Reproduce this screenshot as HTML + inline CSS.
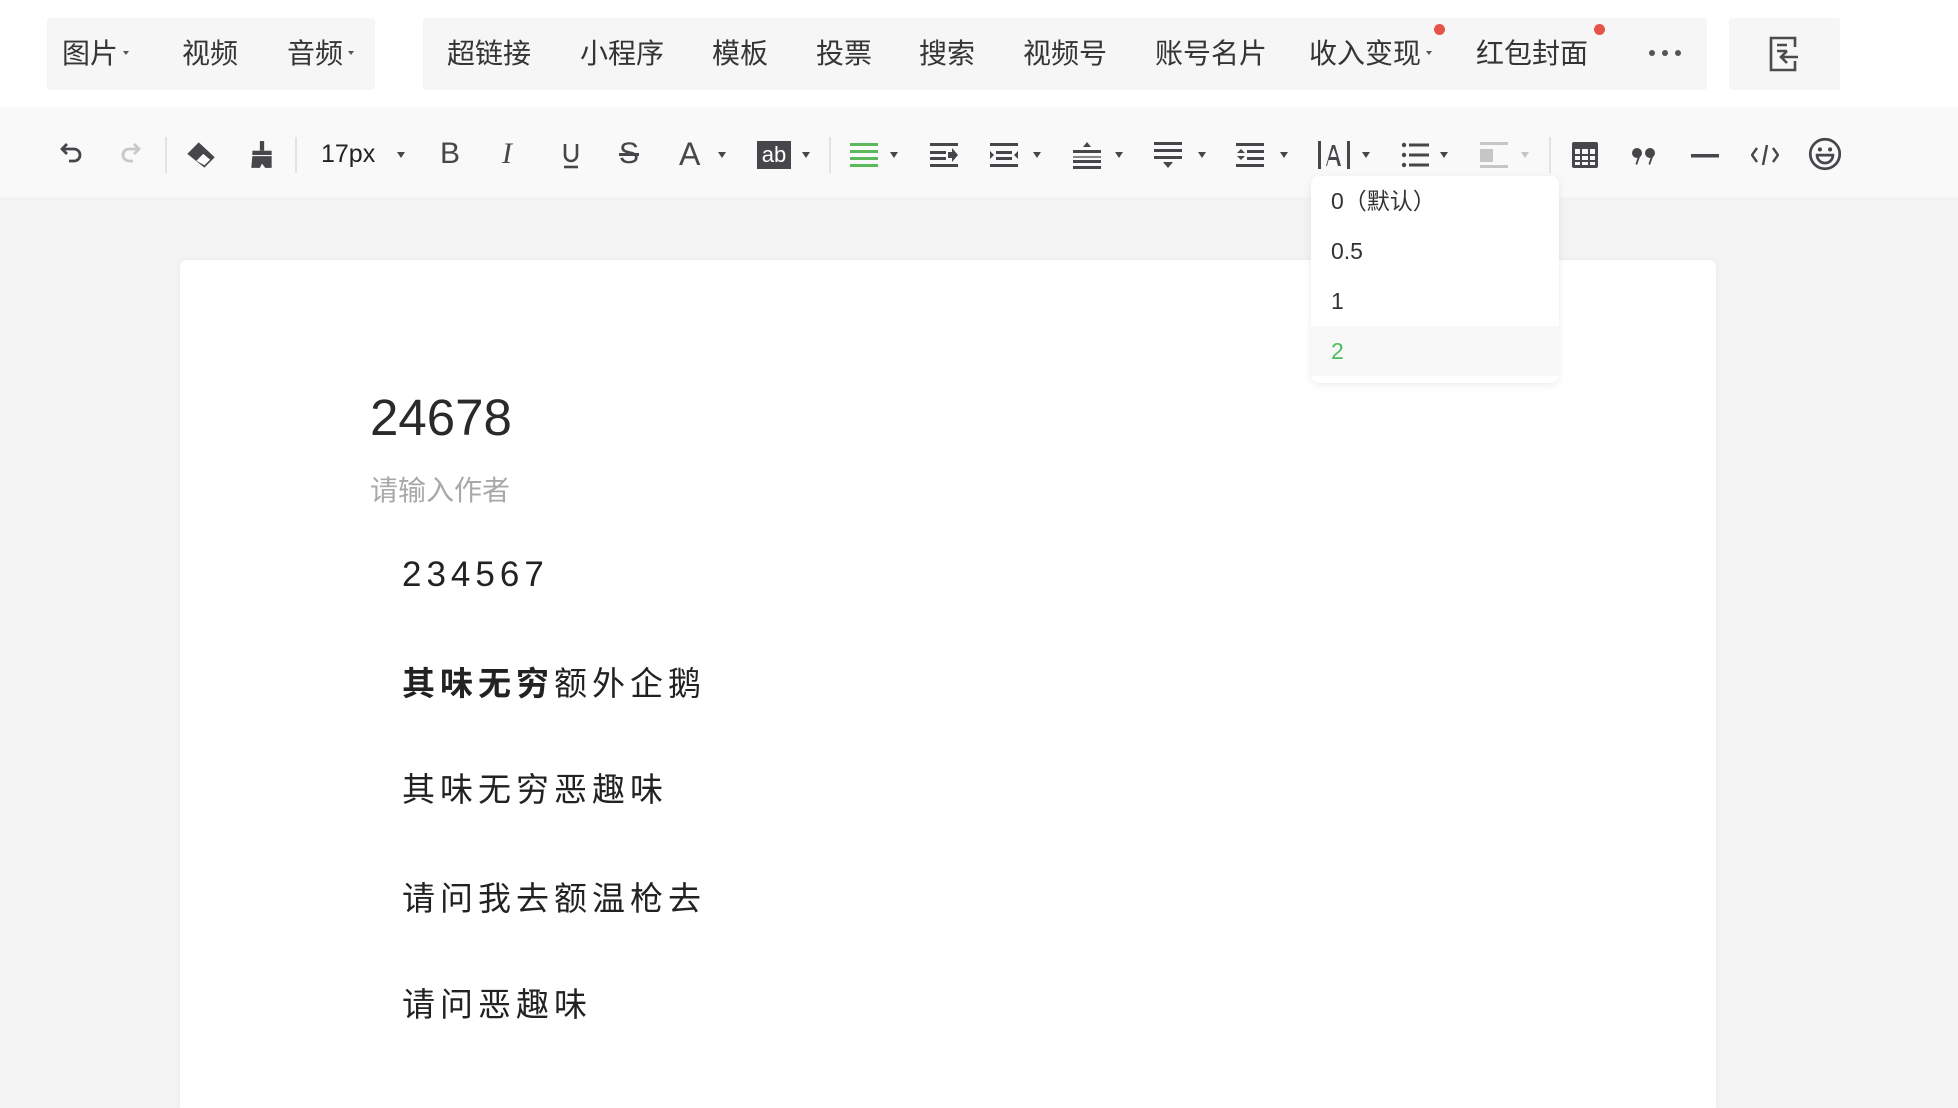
<!DOCTYPE html>
<html><head><meta charset="utf-8"><style>
*{margin:0;padding:0;box-sizing:border-box}
html,body{width:1958px;height:1108px;overflow:hidden}
body{background:#f3f3f3;position:relative;font-family:"Liberation Sans","Noto Sans CJK SC",sans-serif;color:#333}
.top{position:absolute;left:0;top:0;width:1958px;height:107px;background:#fff}
.grp{position:absolute;top:18px;height:72px;background:#f6f6f6;border-radius:3px}
.ti{position:absolute;top:36px;font-size:28px;line-height:36px;color:#353535;white-space:nowrap}
.tri{display:inline-block;width:0;height:0;border-left:3px solid transparent;border-right:3px solid transparent;border-top:4px solid #555;vertical-align:middle;margin-left:5px;position:relative;top:-3px}
.dot{position:absolute;width:11px;height:11px;border-radius:50%;background:#e5534b}
.tb{position:absolute;left:0;top:107px;width:1958px;height:90px;background:#f9f9f9}
.ic{position:absolute;top:141px;width:28px;height:28px}
.ar{position:absolute;top:152px;width:0;height:0;border-left:4px solid transparent;border-right:4px solid transparent;border-top:6px solid #46464b}
.sep{position:absolute;top:137px;width:2px;height:36px;background:#e3e3e3}
.card{position:absolute;left:180px;top:260px;width:1536px;height:848px;background:#fff;border-radius:7px 7px 0 0;box-shadow:0 0 6px rgba(0,0,0,.04)}
.p{position:absolute;left:402px;font-size:33px;letter-spacing:5px;color:#222;white-space:nowrap;line-height:40px}
.dd{position:absolute;left:1311px;top:176px;width:248px;height:207px;background:#fff;border-radius:8px;box-shadow:0 2px 8px rgba(0,0,0,.08)}
.di{position:absolute;left:20px;font-size:23px;line-height:30px;color:#333}
</style></head><body>
<div class="top"></div>
<div class="grp" style="left:47px;width:328px"></div>
<div class="grp" style="left:423px;width:1284px"></div>
<div class="grp" style="left:1729px;width:111px"></div>
<div class="ti" style="left:62px">图片<span class="tri"></span></div>
<div class="ti" style="left:182px">视频</div>
<div class="ti" style="left:287px">音频<span class="tri"></span></div>
<div class="ti" style="left:447px">超链接</div>
<div class="ti" style="left:580px">小程序</div>
<div class="ti" style="left:712px">模板</div>
<div class="ti" style="left:816px">投票</div>
<div class="ti" style="left:919px">搜索</div>
<div class="ti" style="left:1023px">视频号</div>
<div class="ti" style="left:1155px">账号名片</div>
<div class="ti" style="left:1309px">收入变现<span class="tri"></span></div>
<div class="ti" style="left:1476px">红包封面</div>
<div class="dot" style="left:1434px;top:24px"></div>
<div class="dot" style="left:1594px;top:24px"></div>
<svg style="position:absolute;left:1648px;top:48px" width="34" height="10"><circle cx="4" cy="5" r="3" fill="#555"/><circle cx="17" cy="5" r="3" fill="#555"/><circle cx="30" cy="5" r="3" fill="#555"/></svg>
<svg style="position:absolute;left:1768px;top:35px" width="32" height="38" viewBox="0 0 32 38" fill="none" stroke="#4a4a4f" stroke-width="2.6"><path d="M27 12V3H3v32h24v-9"/><path d="M9 10h10M9 16h10"/><path d="M30 22H14M19 16l-6 6 6 6"/></svg>

<div class="tb"></div>
<svg class="ic" style="left:57px" viewBox="0 0 28 28" fill="none" stroke="#46464b" stroke-width="2.8"><path d="M6 8h11a6 6 0 0 1 0 12h-5"/><path d="M10 3L5 8l5 5"/></svg>
<svg class="ic" style="left:116px" viewBox="0 0 28 28" fill="none" stroke="#c8c8c8" stroke-width="2.8"><path d="M22 8h-9a6 6 0 0 0 0 12h4"/><path d="M18 3l5 5-5 5"/></svg>
<div class="sep" style="left:165px"></div>
<svg class="ic" style="left:185px;width:32px;height:32px;top:139px" viewBox="0 0 28 28"><path d="M2 13L12 3l14 13-9 9z" fill="#46464b"/><path d="M10 19l6-6 6 5-5 5z" fill="#fff"/></svg>
<svg class="ic" style="left:247px;width:30px;height:30px;top:140px" viewBox="0 0 28 28" fill="#46464b"><rect x="12" y="1" width="4" height="9"/><rect x="5" y="10" width="18" height="4"/><path d="M5 15h18v11h-6l-3-4-2 4H4z"/></svg>
<div class="sep" style="left:295px"></div>
<div style="position:absolute;left:321px;top:138px;font-size:25px;line-height:32px;color:#222">17px</div>
<div class="ar" style="left:397px"></div>
<div style="position:absolute;left:440px;top:136px;font-size:30px;line-height:36px;color:#46464b">B</div>
<div style="position:absolute;left:502px;top:136px;font-size:30px;line-height:36px;color:#46464b;font-family:'Liberation Serif',serif;font-style:italic">I</div>
<svg class="ic" style="left:557px" viewBox="0 0 28 28" fill="none" stroke="#46464b" stroke-width="2.6"><path d="M8 3v11a6 6 0 0 0 12 0V3"/><path d="M7 26h14"/></svg>
<div style="position:absolute;left:619px;top:136px;font-size:30px;line-height:36px;color:#46464b;text-decoration:line-through">S</div>
<div style="position:absolute;left:679px;top:136px;font-size:32px;line-height:36px;color:#46464b">A</div>
<div class="ar" style="left:718px"></div>
<div style="position:absolute;left:757px;top:141px;width:34px;height:28px;background:#46464b;color:#fff;font-size:22px;line-height:27px;text-align:center">ab</div>
<div class="ar" style="left:802px"></div>
<div class="sep" style="left:829px"></div>
<svg class="ic" style="left:850px" viewBox="0 0 28 28" fill="#5cb85c"><rect x="0" y="2" width="28" height="3"/><rect x="0" y="9" width="28" height="3"/><rect x="0" y="16" width="28" height="3"/><rect x="0" y="23" width="28" height="3"/></svg>
<div class="ar" style="left:890px"></div>
<svg class="ic" style="left:930px" viewBox="0 0 28 28" fill="#46464b"><rect x="0" y="2" width="28" height="3"/><rect x="0" y="10" width="16" height="3"/><rect x="0" y="16" width="16" height="3"/><path d="M18 11h4V7l6 7-6 7v-4h-4z"/><rect x="0" y="23" width="28" height="3"/></svg>
<svg class="ic" style="left:990px" viewBox="0 0 28 28" fill="#46464b"><rect x="0" y="2" width="28" height="3"/><rect x="6" y="10" width="16" height="3"/><rect x="6" y="16" width="16" height="3"/><path d="M0 10l4 4-4 4zM28 10l-4 4 4 4z"/><rect x="0" y="23" width="28" height="3"/></svg>
<div class="ar" style="left:1033px"></div>
<svg class="ic" style="left:1073px" viewBox="0 0 28 28" fill="#46464b"><path d="M14 1l4 5h-8z"/><rect x="0" y="9" width="28" height="3"/><rect x="0" y="15" width="28" height="2" fill="#888"/><rect x="0" y="19" width="28" height="3"/><rect x="0" y="25" width="28" height="3"/></svg>
<div class="ar" style="left:1115px"></div>
<svg class="ic" style="left:1154px" viewBox="0 0 28 28" fill="#46464b"><rect x="0" y="1" width="28" height="3"/><rect x="0" y="8" width="28" height="3"/><rect x="0" y="15" width="28" height="3"/><path d="M9 21h10l-5 6z"/></svg>
<div class="ar" style="left:1198px"></div>
<svg class="ic" style="left:1236px" viewBox="0 0 28 28" fill="#46464b"><rect x="0" y="2" width="28" height="3"/><rect x="11" y="9" width="17" height="3"/><rect x="11" y="16" width="17" height="3"/><path d="M1 12l4-4 4 4zM1 15l4 4 4-4z"/><rect x="0" y="23" width="28" height="3"/></svg>
<div class="ar" style="left:1280px"></div>
<svg class="ic" style="left:1318px;width:32px" viewBox="0 0 32 28" fill="#46464b"><rect x="0" y="0" width="3" height="28"/><rect x="29" y="0" width="3" height="28"/><path d="M8 25L14 4h3l6 21h-3l-1.6-6h-7.8L9 25zM12.3 16h6.4L15.5 7z"/></svg>
<div class="ar" style="left:1362px"></div>
<svg class="ic" style="left:1401px" viewBox="0 0 28 28" fill="#46464b"><circle cx="3" cy="4" r="2.2"/><circle cx="3" cy="14" r="2.2"/><circle cx="3" cy="24" r="2.2"/><rect x="8" y="2.5" width="20" height="3"/><rect x="8" y="12.5" width="20" height="3"/><rect x="8" y="22.5" width="20" height="3"/></svg>
<div class="ar" style="left:1440px"></div>
<svg class="ic" style="left:1480px" viewBox="0 0 28 28" fill="#c6c6c6"><rect x="0" y="1" width="28" height="3"/><rect x="0" y="8" width="13" height="13"/><rect x="0" y="24" width="28" height="3"/></svg>
<div class="ar" style="left:1521px;border-top-color:#c6c6c6"></div>
<div class="sep" style="left:1549px"></div>
<svg class="ic" style="left:1571px" viewBox="0 0 28 28"><rect x="1" y="1" width="26" height="26" rx="2" fill="#46464b"/><g fill="#f9f9f9"><rect x="4" y="8" width="5" height="5"/><rect x="11" y="8" width="6" height="5"/><rect x="19" y="8" width="5" height="5"/><rect x="4" y="15" width="5" height="4"/><rect x="11" y="15" width="6" height="4"/><rect x="19" y="15" width="5" height="4"/><rect x="4" y="21" width="5" height="3"/><rect x="11" y="21" width="6" height="3"/><rect x="19" y="21" width="5" height="3"/></g></svg>
<svg class="ic" style="left:1630px" viewBox="0 0 28 28" fill="#46464b"><circle cx="7" cy="12" r="5"/><path d="M11 13l-4 11-1.5-1 3-9z"/><circle cx="20" cy="12" r="5"/><path d="M24 13l-4 11-1.5-1 3-9z"/></svg>
<svg class="ic" style="left:1691px" viewBox="0 0 28 28"><rect x="0" y="13" width="28" height="3.5" fill="#46464b"/></svg>
<svg class="ic" style="left:1751px" viewBox="0 0 28 28" fill="none" stroke="#46464b" stroke-width="2.4"><path d="M6 7L1 14l5 7M22 7l5 7-5 7M16 4l-4 20"/></svg>
<svg class="ic" style="left:1808px;width:34px;height:34px;top:137px" viewBox="0 0 30 30" fill="none" stroke="#46464b" stroke-width="2.4"><circle cx="15" cy="15" r="13"/><circle cx="10.5" cy="11" r="1.8" fill="#46464b" stroke="none"/><circle cx="19.5" cy="11" r="1.8" fill="#46464b" stroke="none"/><path d="M8 16h14a7 7 0 0 1-14 0z"/></svg>

<div class="card"></div>
<div style="position:absolute;left:370px;top:388px;font-size:51px;line-height:60px;color:#2a2a2a">24678</div>
<div style="position:absolute;left:370px;top:473px;font-size:28px;line-height:36px;color:#a8a8a8">请输入作者</div>
<div class="p" style="left:402px;top:555px;letter-spacing:5px;font-size:35px">234567</div>
<div class="p" style="top:664px"><b>其味无穷</b>额外企鹅</div>
<div class="p" style="top:770px">其味无穷恶趣味</div>
<div class="p" style="top:879px">请问我去额温枪去</div>
<div class="p" style="top:985px">请问恶趣味</div>

<div class="dd">
<div style="position:absolute;left:0;top:150px;width:248px;height:50px;background:#f8f8f8"></div>
<div class="di" style="top:10px">0（默认）</div>
<div class="di" style="top:60px">0.5</div>
<div class="di" style="top:110px">1</div>
<div class="di" style="top:160px;color:#4cbd5c">2</div>
</div>
</body></html>
